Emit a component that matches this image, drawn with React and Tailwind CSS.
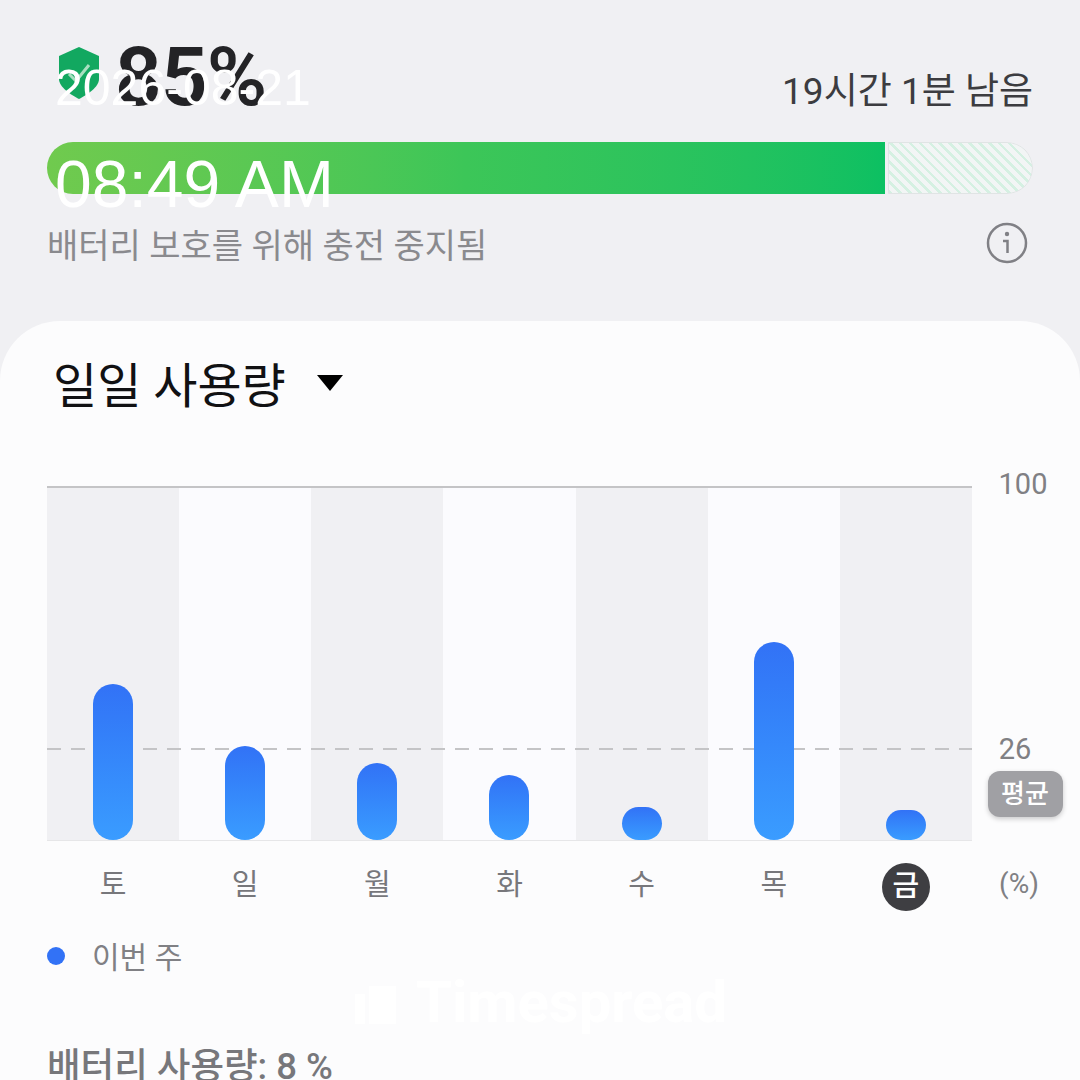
const fontStack = "font-['Roboto','Noto_Sans_CJK_KR',sans-serif]";

const days = [
  { label: "토", height: 156 },
  { label: "일", height: 94 },
  { label: "월", height: 77 },
  { label: "화", height: 65 },
  { label: "수", height: 33 },
  { label: "목", height: 198 },
  { label: "금", height: 30, today: true },
];

function Shield() {
  return (
    <svg width="42" height="52" viewBox="0 0 42 52" className="shrink-0">
      <path d="M21 0 L41 9 V32 C41 40 29 48 21 52 C13 48 1 40 1 32 V9 Z" fill="#12a860" />
      <path d="M11 27 L18 34 L31 18" fill="none" stroke="#a8e0c0" strokeWidth="3" />
    </svg>
  );
}

function InfoIcon() {
  return (
    <svg width="42" height="42" viewBox="0 0 42 42" className="mb-[4px]">
      <circle cx="21" cy="21" r="19" fill="none" stroke="#808085" strokeWidth="2.5" />
      <circle cx="21" cy="12" r="2.2" fill="#808085" />
      <path d="M17 19 H21.5 V31" fill="none" stroke="#808085" strokeWidth="2.5" />
    </svg>
  );
}

export default function App() {
  return (
    <div className={`${fontStack} relative w-[1080px] h-[1080px] overflow-hidden bg-[#f0f0f3]`}>
      {/* Battery header */}
      <div className="h-[321px] pl-[47px] pr-[47px] pt-[47px]">
        <div className="flex items-start justify-between h-[95px]">
          <div className="flex items-start pl-[11px] gap-[15px]">
            <Shield />
            <span className="text-[82px] leading-[60px] font-semibold text-[#232326] tracking-[-1px]">85%</span>
          </div>
          <span className="mt-[22px] text-[37px] leading-[46px] text-[#3c3c40]">19시간 1분 남음</span>
        </div>
        <div className="flex h-[52px] rounded-[26px] overflow-hidden">
          <div className="w-[838px] bg-gradient-to-r from-[#70ca4e] via-[#3cc658] to-[#0cc062]" />
          <div className="ml-[3px] flex-1 rounded-r-[26px] border border-[#e0e4e4] bg-[repeating-linear-gradient(45deg,#d5f0e2_0px,#d5f0e2_2.5px,#f2f5f5_2.5px,#f2f5f5_7px)]" />
        </div>
        <div className="flex items-center justify-between mt-[25px] pr-[5px]">
          <span className="mt-[3px] text-[34px] leading-[48px] text-[#8a8a8e]">배터리 보호를 위해 충전 중지됨</span>
          <InfoIcon />
        </div>
      </div>

      {/* Usage card */}
      <div className="h-[759px] rounded-t-[60px] bg-[#fcfcfd] pl-[47px]">
        <div className="flex gap-[31px] pt-[36px] pl-[6px] h-[165px] items-start">
          <span className="text-[48px] leading-[60px] text-[#111113]">일일 사용량</span>
          <svg width="26" height="16" viewBox="0 0 26 16" className="mt-[18px]">
            <path d="M0 0 H26 L13 16 Z" fill="#000" />
          </svg>
        </div>

        <div className="flex">
          <div className="relative w-[925px]">
            <div className="grid grid-cols-7 h-[355px] border-t-2 border-[#c4c4c6] border-b border-b-[#e6e6e8]">
              {days.map((day, i) => (
                <div
                  key={day.label}
                  className={`flex items-end justify-center ${i % 2 === 0 ? "bg-[#f0f0f3]" : "bg-[#fbfbfe]"}`}
                >
                  <div
                    className="relative z-10 w-[40px] rounded-[20px] bg-gradient-to-b from-[#3272f6] to-[#3a9cff]"
                    style={{ height: day.height }}
                  />
                </div>
              ))}
            </div>
            {/* average line, sits behind the bars */}
            <div className="absolute left-0 right-0 top-[262px] h-[2px] bg-[repeating-linear-gradient(90deg,#c4c4c6_0px,#c4c4c6_14px,transparent_14px,transparent_24px)]" />
            <div className="grid grid-cols-7 h-[70px] items-center pt-[17px]">
              {days.map((day) => (
                <div key={day.label} className="flex justify-center">
                  {day.today ? (
                    <span className="flex items-center justify-center w-[48px] h-[48px] mt-[4px] rounded-full bg-[#3e3e42] text-white text-[29px] font-medium">
                      {day.label}
                    </span>
                  ) : (
                    <span className="text-[29px] leading-[40px] text-[#77777b]">{day.label}</span>
                  )}
                </div>
              ))}
            </div>
          </div>

          <div className="flex flex-col items-center w-[92px] ml-[5px] text-[29px] text-[#808084]">
            <span className="leading-[40px] mt-[-22px]">100</span>
            <span className="leading-[40px] mt-[225px] mr-[16px]">26</span>
            <span className="mt-[2px] ml-[4px] flex items-center justify-center w-[75px] h-[46px] rounded-[12px] bg-[#a0a0a4] text-white text-[26px] font-medium shadow-[0_2px_5px_rgba(0,0,0,0.2)]">
              평균
            </span>
            <span className="leading-[40px] mt-[47px] mr-[8px] text-[28px]">(%)</span>
          </div>
        </div>

        <div className="flex items-center gap-[27px] mt-[22px] h-[46px]">
          <span className="w-[18px] h-[18px] rounded-full bg-[#3272f6]" />
          <span className="mt-[4px] text-[30px] leading-[40px] text-[#808084]">이번 주</span>
        </div>
        <div className="mt-[73px] text-[36.5px] leading-[30px] font-medium text-[#77777b]">배터리 사용량: 8 %</div>
      </div>

      {/* Timestamp stamped over the capture */}
      <div className="absolute left-[55px] top-[60px] text-[50px] leading-[56px] text-white font-['Liberation_Sans',sans-serif]">
        2026-08-21
      </div>
      <div className="absolute left-[55px] top-[146px] text-[66px] leading-[76px] text-white font-['Liberation_Sans',sans-serif]">
        08:49 AM
      </div>

      {/* Watermark */}
      <div className="absolute left-[355px] top-[972px] flex items-center gap-[20px]">
        <div className="flex gap-[4px] items-end h-[44px]">
          <span className="w-[10px] h-[30px] bg-white" />
          <span className="w-[27px] h-[38px] bg-white" />
        </div>
        <span className="text-[58px] leading-[60px] font-bold text-white font-['Roboto',sans-serif]">Timespread</span>
      </div>
    </div>
  );
}
